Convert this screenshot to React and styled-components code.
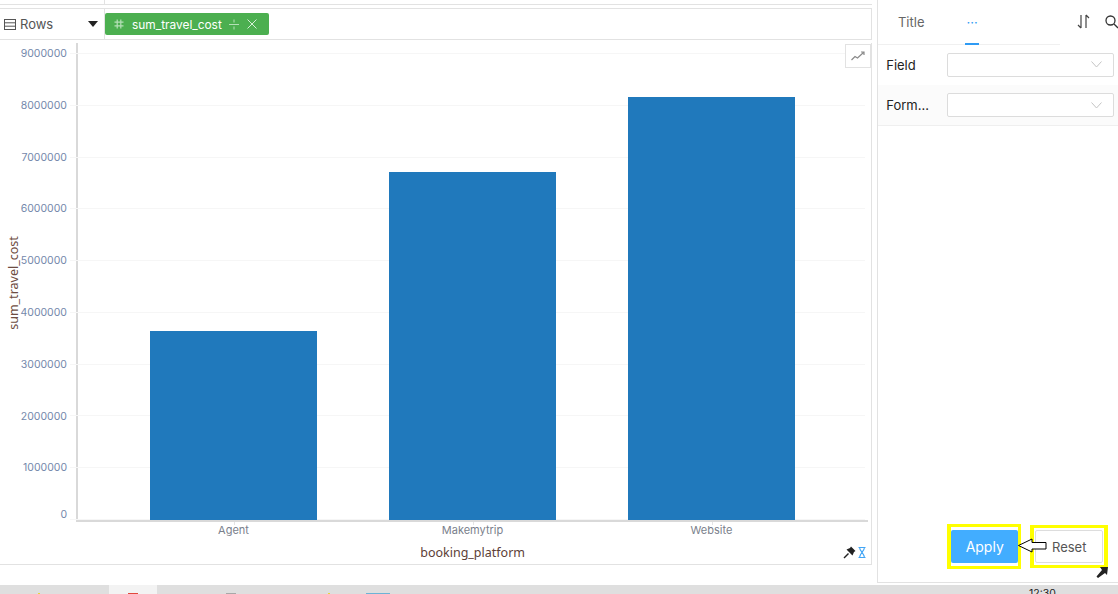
import React from 'react';
import styled, { createGlobalStyle } from 'styled-components';

const GlobalStyle = createGlobalStyle`
  html, body {
    margin: 0;
    padding: 0;
    background: #fff;
    overflow: hidden;
  }
  body {
    font-family: "Inter", "Liberation Sans", sans-serif;
  }
`;

const Page = styled.div`
  width: 1118px;
  height: 594px;
  display: flex;
  flex-direction: column;
  overflow: hidden;
`;

const Workspace = styled.div`
  height: 585px;
  display: flex;
`;

const LeftColumn = styled.div`
  width: 873px;
  height: 565px;
  display: flex;
  flex-direction: column;
`;

const TopStrip = styled.div`
  height: 4px;
  border-bottom: 1px solid #e2e2e2;
  display: flex;
`;

const StripCell = styled.div`
  width: 104px;
  border-right: 1px solid #e2e2e2;
`;

const RowsBar = styled.div`
  margin-top: 3px;
  height: 32px;
  box-sizing: border-box;
  border-top: 1px solid #e2e2e2;
  border-bottom: 1px solid #e2e2e2;
  border-right: 1px solid #e2e2e2;
  display: flex;
  align-items: center;
`;

const RowsLabel = styled.div`
  width: 105px;
  height: 100%;
  padding: 0 4px;
  box-sizing: border-box;
  border-right: 1px solid #e2e2e2;
  display: flex;
  align-items: center;
  gap: 4px;
  font-size: 13px;
  color: #555;
`;

const Caret = styled.span`
  margin-left: auto;
  margin-right: 2px;
  width: 0;
  height: 0;
  border-left: 5px solid transparent;
  border-right: 5px solid transparent;
  border-top: 6px solid #222;
`;

const Pill = styled.div`
  width: 164px;
  height: 22px;
  border-radius: 2px;
  background: #4caf50;
  color: #fff;
  font-size: 11.9px;
  display: flex;
  align-items: center;
  padding: 0 11px 0 9px;
  box-sizing: border-box;
  white-space: nowrap;
`;

const PillName = styled.span`
  width: 90px;
  margin-left: 8px;
  margin-right: 7px;
`;

const PillClose = styled.svg`
  margin-left: 8px;
`;

const ChartCard = styled.div`
  flex: 1;
  margin-top: 3px;
  border-right: 1px solid #e2e2e2;
  border-bottom: 1px solid #e2e2e2;
  display: grid;
  grid-template-columns: 76px 1fr;
  grid-template-rows: 479px 1fr;
  position: relative;
`;

const YAxis = styled.div`
  position: relative;
  display: flex;
  flex-direction: column;
  align-items: flex-end;
  padding: 5px 9px 0 0;
  font-size: 10.5px;
  line-height: 12px;
  color: #7488ab;
`;

const Tick = styled.div`
  height: 51.8px;
  flex: none;
  &:last-of-type {
    margin-top: -5px;
  }
`;

const YTitle = styled.span`
  position: absolute;
  left: -36px;
  top: 233px;
  width: 100px;
  text-align: center;
  transform: rotate(-90deg);
  font-family: "Noto Sans", sans-serif;
  font-size: 12.5px;
  line-height: 14px;
  color: #6d4c41;
  white-space: nowrap;
`;

const Plot = styled.div`
  position: relative;
  border-left: 2px solid #d9d9d9;
  border-bottom: 2px solid #d9d9d9;
  margin-right: 3px;
  display: flex;
  gap: 72px;
  align-items: flex-end;
  padding-left: 72px;
`;

const GridLines = styled.div`
  position: absolute;
  left: -8px;
  right: 3px;
  top: 10px;
  height: 467px;
  display: flex;
  flex-direction: column;
  justify-content: space-between;
`;

const GridLine = styled.div`
  height: 1px;
  background: #f6f6f6;
`;

const Bar = styled.div`
  position: relative;
  width: 167px;
  background: #2079bc;
`;

const TrendButton = styled.div`
  position: absolute;
  top: 1px;
  right: 0;
  width: 26px;
  height: 24px;
  box-sizing: border-box;
  border: 1px solid #e2e2e2;
  display: flex;
  align-items: center;
  justify-content: center;
  background: #fff;
`;

const XArea = styled.div`
  grid-column: 2;
  position: relative;
  display: flex;
  flex-direction: column;
`;

const XLabels = styled.div`
  display: flex;
  gap: 72px;
  padding: 2px 0 0 74px;
  font-size: 11px;
  line-height: 13px;
  color: #7a7f8c;
`;

const XLabel = styled.div`
  position: relative;
  width: 167px;
  text-align: center;
  &::before {
    content: '';
    position: absolute;
    left: 50%;
    top: -2px;
    width: 1px;
    height: 3px;
    background: #e4e4e4;
  }
`;

const XTitle = styled.div`
  margin-top: 8px;
  padding-right: 2px;
  text-align: center;
  font-family: "Noto Sans", sans-serif;
  font-size: 12.5px;
  line-height: 16px;
  color: #5d4037;
`;

const CornerIcons = styled.div`
  position: absolute;
  right: 5px;
  bottom: 5px;
  display: flex;
  align-items: center;
  gap: 2px;
`;

const SidePanel = styled.div`
  width: 240px;
  height: 582px;
  margin-left: 5px;
  border-left: 1px solid #e2e2e2;
  border-bottom: 1px solid #e2e2e2;
  position: relative;
  display: flex;
  flex-direction: column;
`;

const TabBar = styled.div`
  height: 45px;
  border-bottom: 1px solid #f0f0f0;
  margin-right: 58px;
  display: flex;
  box-sizing: border-box;
  position: relative;
`;

const Tab = styled.div`
  width: ${p => p.$w}px;
  margin-left: ${p => p.$ml}px;
  height: 45px;
  box-sizing: border-box;
  display: flex;
  justify-content: center;
  padding-top: 14px;
  font-size: 13px;
  line-height: 16px;
  color: ${p => (p.$active ? '#2f9bf4' : '#666')};
  border-bottom: ${p => (p.$active ? '2px solid #2f9bf4' : 'none')};
`;

const TabTools = styled.div`
  position: absolute;
  top: 14px;
  right: -1px;
  display: flex;
  align-items: center;
  gap: 15px;
`;

const FormRow = styled.div`
  height: ${p => (p.$shade ? 41 : 40)}px;
  display: flex;
  align-items: center;
  padding-left: 8px;
  box-sizing: border-box;
  border-bottom: 1px solid ${p => (p.$shade ? '#efefef' : 'transparent')};
  background: ${p => (p.$shade ? '#fbfbfb' : '#fff')};
`;

const FieldLabel = styled.div`
  width: 61px;
  font-size: 13px;
  color: #222;
`;

const FieldSelect = styled.div`
  width: 167px;
  height: 24px;
  box-sizing: border-box;
  border: 1px solid #dcdcdc;
  border-radius: 2px;
  background: #fff;
  display: flex;
  align-items: center;
  justify-content: flex-end;
  padding-right: 11px;
`;

const ActionRow = styled.div`
  position: absolute;
  left: 69px;
  top: 524px;
  height: 45px;
  display: flex;
  align-items: center;
  gap: 9px;
`;

const Highlight = styled.div`
  width: ${p => p.$w}px;
  height: ${p => p.$h}px;
  box-sizing: border-box;
  border: solid #ffff00;
  border-width: ${p => p.$border};
  padding: ${p => p.$pad};
  display: flex;
`;

const ApplyButton = styled.button`
  flex: 1;
  border: 0;
  border-radius: 2px;
  background: #42adff;
  color: #fff;
  font: 14px "Inter", "Liberation Sans", sans-serif;
  padding: 0;
`;

const ResetButton = styled.button`
  flex: 1;
  border: 1px solid #ddd;
  border-radius: 2px;
  background: #fff;
  color: #555;
  font: 13px "Inter", "Liberation Sans", sans-serif;
  padding: 0;
`;

const Arrow = styled.svg`
  position: absolute;
  left: 71px;
  top: 14px;
`;

const PinMark = styled.svg`
  position: absolute;
  right: 10px;
  top: 567px;
`;

const Taskbar = styled.div`
  height: 9px;
  background: #dfdfdf;
  position: relative;
  overflow: hidden;
`;

const TaskSlot = styled.div`
  position: absolute;
  left: 109px;
  width: 48px;
  height: 9px;
  background: #f3f3f3;
`;

const TaskMark = styled.div`
  position: absolute;
  left: ${p => p.$x}px;
  bottom: 0;
  width: ${p => p.$w}px;
  height: 1px;
  background: ${p => p.$color};
`;

const Clock = styled.div`
  position: absolute;
  left: 1029px;
  top: 3px;
  font-size: 10.5px;
  line-height: 12px;
  color: #222;
`;

const ticks = ['9000000', '8000000', '7000000', '6000000', '5000000', '4000000', '3000000', '2000000', '1000000', '0'];
const bars = [
  { name: 'Agent', height: 189 },
  { name: 'Makemytrip', height: 348 },
  { name: 'Website', height: 423 },
];
const taskMarks = [
  { x: 38, w: 2, color: '#e8d53a' },
  { x: 128, w: 10, color: '#e2483d' },
  { x: 226, w: 10, color: '#a8a8a8' },
  { x: 328, w: 2, color: '#e8d53a' },
  { x: 366, w: 24, color: '#6db3d6' },
];

const Chevron = () => (
  <svg width="11" height="7" viewBox="0 0 11 7" fill="none" stroke="#c4c4c4" strokeWidth="1">
    <path d="M0.5 0.5L5.5 6L10.5 0.5" />
  </svg>
);

export default function App() {
  return (
    <Page>
      <GlobalStyle />
      <Workspace>
        <LeftColumn>
          <TopStrip>
            <StripCell />
          </TopStrip>
          <RowsBar>
            <RowsLabel>
              <svg width="12" height="11" viewBox="0 0 12 11" fill="none" stroke="#555" strokeWidth="1">
                <rect x="0.5" y="0.5" width="11" height="10" />
                <path d="M0.5 3.8H11.5M0.5 7.2H11.5" />
              </svg>
              Rows
              <Caret />
            </RowsLabel>
            <Pill>
              <svg width="10" height="10" viewBox="0 0 10 10" fill="none" stroke="#b5e0b7" strokeWidth="1.2">
                <path d="M3.2 0.5V9.5M6.8 0.5V9.5M0.5 3.2H9.5M0.5 6.8H9.5" />
              </svg>
              <PillName>sum_travel_cost</PillName>
              <svg width="10" height="11" viewBox="0 0 10 11" fill="none" stroke="#b5e0b7" strokeWidth="1">
                <path d="M0 5.5H10M5 0.5V3.5M5 7.5V10.5" />
              </svg>
              <PillClose width="10" height="10" viewBox="0 0 10 10" fill="none" stroke="#d5efd6" strokeWidth="1">
                <path d="M0.5 0.5L9.5 9.5M9.5 0.5L0.5 9.5" />
              </PillClose>
            </Pill>
          </RowsBar>
          <ChartCard>
            <YAxis>
              {ticks.map(t => (
                <Tick key={t}>{t}</Tick>
              ))}
              <YTitle>sum_travel_cost</YTitle>
            </YAxis>
            <Plot>
              <GridLines>
                {ticks.map(t => (
                  <GridLine key={t} />
                ))}
              </GridLines>
              {bars.map(b => (
                <Bar key={b.name} style={{ height: b.height }} />
              ))}
            </Plot>
            <TrendButton>
              <svg width="14" height="10" viewBox="0 0 14 10" fill="none" stroke="#8a8a8a" strokeWidth="1.2">
                <path d="M0.5 9L4 5.5L6.5 7L12.5 1.5M10 1H13V4" />
              </svg>
            </TrendButton>
            <XArea>
              <XLabels>
                {bars.map(b => (
                  <XLabel key={b.name}>{b.name}</XLabel>
                ))}
              </XLabels>
              <XTitle>booking_platform</XTitle>
              <CornerIcons>
                <svg width="13" height="13" viewBox="0 0 13 13" fill="#222">
                  <path d="M8 0.5L12.5 5L11 6L9.5 9.5L3.5 3.5L7 2Z" />
                  <path d="M5.5 7.5L1 12" stroke="#222" strokeWidth="1.4" />
                </svg>
                <svg width="8" height="11" viewBox="0 0 8 11" fill="none" stroke="#42a5f5" strokeWidth="1.1">
                  <path d="M0.5 0.5H7.5M0.5 10.5H7.5M1.5 0.5C1.5 3.5 6.5 7 6.5 10.5M6.5 0.5C6.5 3.5 1.5 7 1.5 10.5" />
                </svg>
              </CornerIcons>
            </XArea>
          </ChartCard>
        </LeftColumn>
        <SidePanel>
          <TabBar>
            <Tab $w={42} $ml={12}>Title</Tab>
            <Tab $w={14} $ml={33} $active>···</Tab>
          </TabBar>
          <TabTools>
            <svg width="13" height="15" viewBox="0 0 13 15" fill="none" stroke="#444" strokeWidth="1.2">
              <path d="M4 1V14M4 14L1 11M9 14V1M9 1L12 4" />
            </svg>
            <svg width="14" height="14" viewBox="0 0 14 14" fill="none" stroke="#333" strokeWidth="1.3">
              <circle cx="5.5" cy="5.5" r="4.5" />
              <path d="M9 9L13 13" />
            </svg>
          </TabTools>
          <FormRow>
            <FieldLabel>Field</FieldLabel>
            <FieldSelect>
              <Chevron />
            </FieldSelect>
          </FormRow>
          <FormRow $shade>
            <FieldLabel>Form...</FieldLabel>
            <FieldSelect>
              <Chevron />
            </FieldSelect>
          </FormRow>
          <ActionRow>
            <Highlight $w={74} $h={45} $border="3px 3px 3px 4px" $pad="3px 0">
              <ApplyButton>Apply</ApplyButton>
            </Highlight>
            <Highlight $w={78} $h={43} $border="3px 4px" $pad="2px 1px">
              <ResetButton>Reset</ResetButton>
            </Highlight>
            <Arrow width="29" height="15" viewBox="0 0 29 15" fill="#fff" stroke="#000" strokeWidth="1">
              <path d="M0.5 7.5L14 1V4.5H28V11H14V14Z" />
            </Arrow>
          </ActionRow>
          <PinMark width="12" height="11" viewBox="0 0 12 11" fill="#222">
            <path d="M4 0H12L11 8L9 6L2 11L0.5 9.5L6 3Z" />
          </PinMark>
        </SidePanel>
      </Workspace>
      <Taskbar>
        <TaskSlot />
        {taskMarks.map(m => (
          <TaskMark key={m.x} $x={m.x} $w={m.w} $color={m.color} />
        ))}
        <Clock>12:30</Clock>
      </Taskbar>
    </Page>
  );
}
